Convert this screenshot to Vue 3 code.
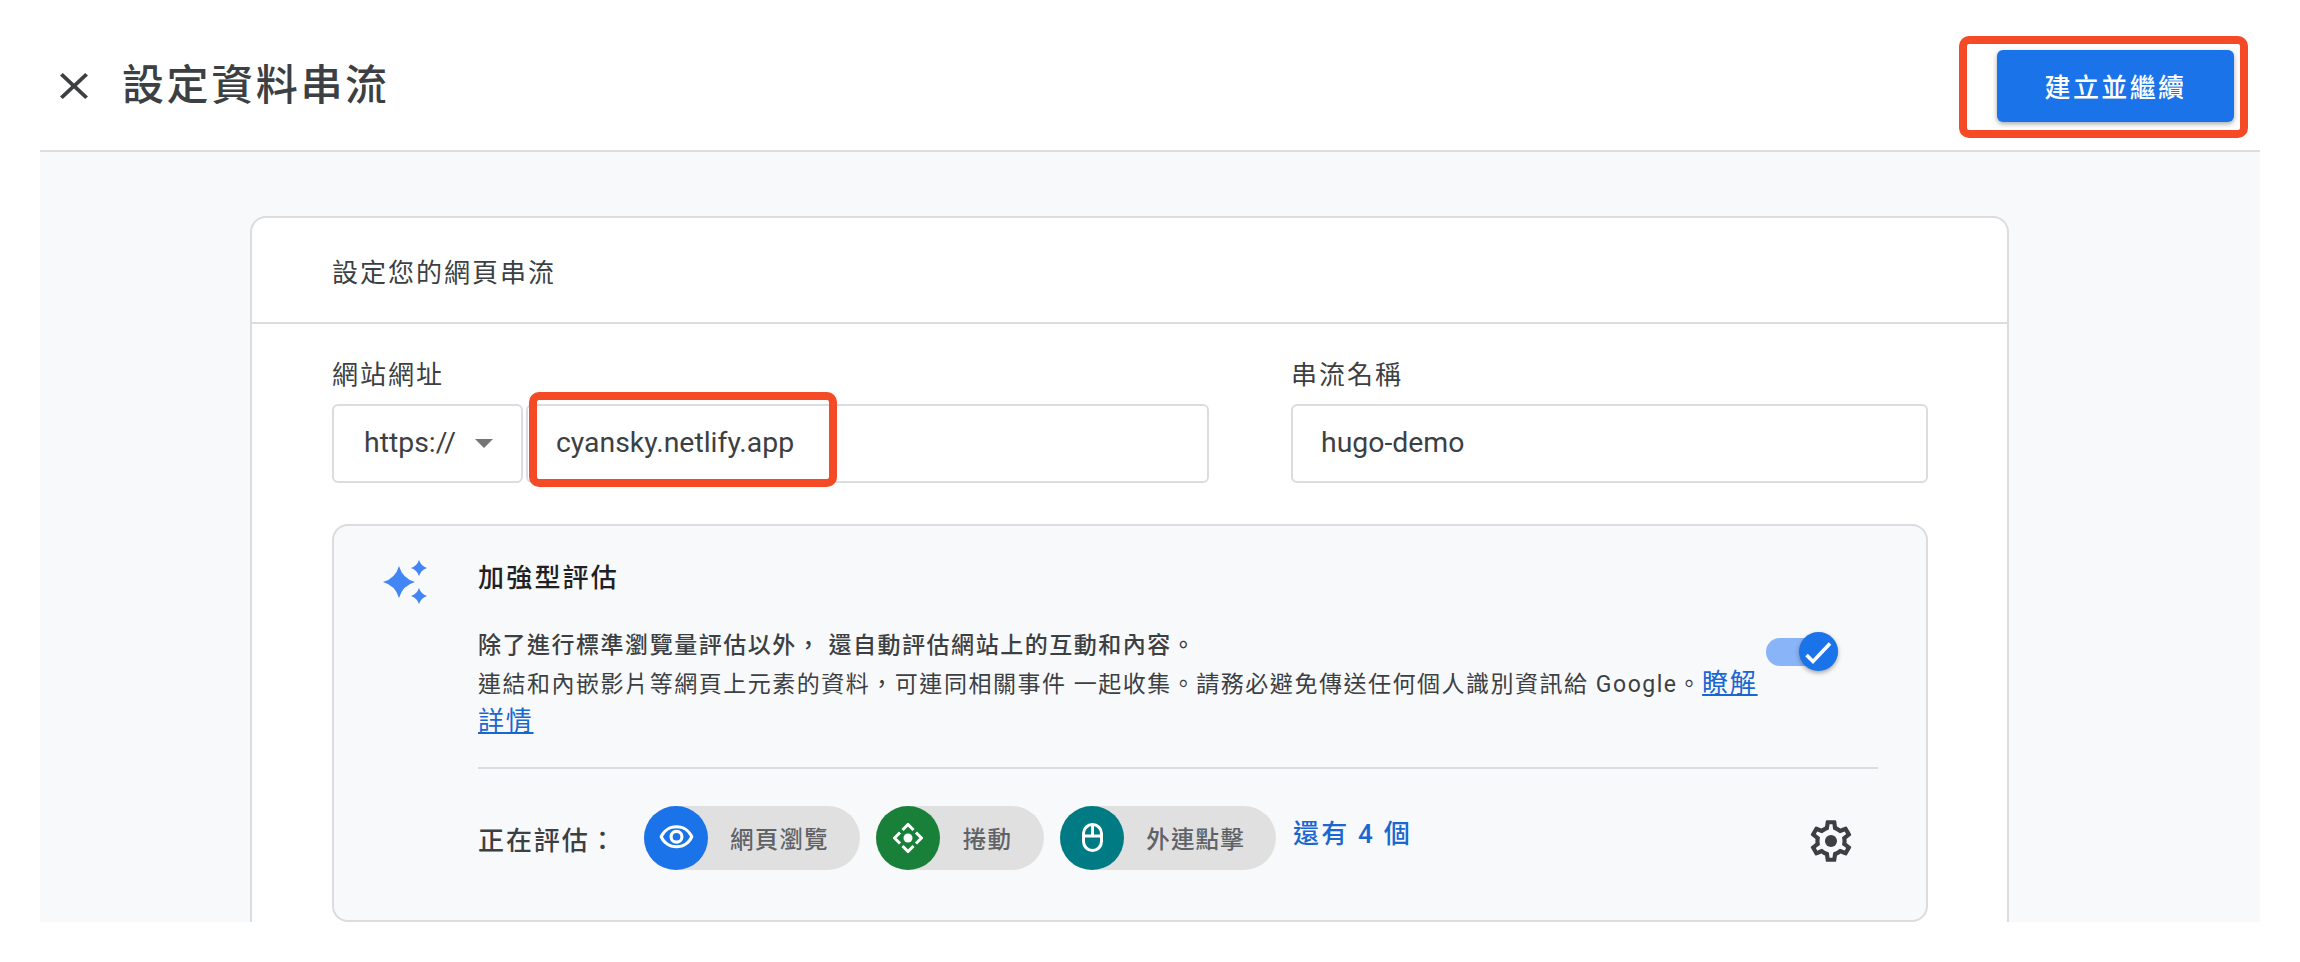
<script setup>
// 已啟用的評估項目
const chips = [
  { key: "view", label: "網頁瀏覽", color: "#1a73e8" },
  { key: "scroll", label: "捲動", color: "#188038" },
  { key: "click", label: "外連點擊", color: "#007b83" },
];
</script>

<template>
  <div class="page">
    <header class="top">
      <svg class="close" viewBox="5 5 14 14" preserveAspectRatio="none">
        <path d="M19 6.41L17.59 5 12 10.59 6.41 5 5 6.41 10.59 12 5 17.59 6.41 19 12 13.41 17.59 19 19 17.59 13.41 12z" />
      </svg>
      <h1 class="title">設定資料串流</h1>
      <div class="save-wrap">
        <button class="save">建立並繼續</button>
        <div class="mark mark-save"></div>
      </div>
    </header>

    <main class="main">
      <section class="card">
        <div class="card-head">設定您的網頁串流</div>
        <div class="card-body">
          <div class="form-row">
            <div class="field-url">
              <label class="label">網站網址</label>
              <div class="url-inputs">
                <div class="select">
                  <span>https://</span>
                  <i class="caret"></i>
                </div>
                <div class="input url-input">
                  cyansky.netlify.app
                  <div class="mark mark-url"></div>
                </div>
              </div>
            </div>
            <div class="field-name">
              <label class="label">串流名稱</label>
              <div class="input">hugo-demo</div>
            </div>
          </div>

          <div class="measure">
            <svg class="sparkle" viewBox="0 0 44 44">
              <path d="M16 6Q19.5 18.5 32 22Q19.5 25.5 16 38Q12.5 25.5 0 22Q12.5 18.5 16 6Z" />
              <path d="M36 0Q38 6 44 8Q38 10 36 16Q34 10 28 8Q34 6 36 0Z" />
              <path d="M36 28Q38 34 44 36Q38 38 36 44Q34 38 28 36Q34 34 36 28Z" />
            </svg>
            <div class="measure-body">
              <div class="measure-title">加強型評估</div>
              <div class="desc-row">
                <div class="desc">
                  <div class="desc-strong">除了進行標準瀏覽量評估以外， 還自動評估網站上的互動和內容。</div>
                  <div>連結和內嵌影片等網頁上元素的資料，可連同相關事件 一起收集。請務必避免傳送任何個人識別資訊給 Google。<a class="link">瞭解詳情</a></div>
                </div>
                <div class="toggle">
                  <div class="thumb">
                    <svg viewBox="0 0 39 39" width="39" height="39">
                      <path d="M7.5 23L14 29.5L31 11.5" fill="none" stroke="#fff" stroke-width="3.6" />
                    </svg>
                  </div>
                </div>
              </div>
              <div class="divider"></div>
              <div class="chip-row">
                <span class="chip-label">正在評估：</span>
                <div class="chips">
                  <div v-for="chip in chips" :key="chip.key" class="chip">
                    <span class="chip-icon" :style="{ background: chip.color }">
                      <svg v-if="chip.key === 'view'" viewBox="0 0 24 24" width="37" height="37" fill="#fff">
                        <path d="M12 6a9.77 9.77 0 0 1 8.82 5.5A9.77 9.77 0 0 1 12 17a9.77 9.77 0 0 1-8.82-5.5A9.77 9.77 0 0 1 12 6m0-2C7 4 2.73 7.11 1 11.5 2.73 15.89 7 19 12 19s9.27-3.11 11-7.5C21.27 7.11 17 4 12 4zm0 5a2.5 2.5 0 0 1 0 5 2.5 2.5 0 0 1 0-5m0-2c-2.48 0-4.5 2.02-4.5 4.5S9.52 16 12 16s4.5-2.02 4.5-4.5S14.48 7 12 7z" />
                      </svg>
                      <svg v-else-if="chip.key === 'scroll'" viewBox="0 0 30 30" width="30" height="30">
                        <path d="M9.5 7L15 1.5L20.5 7M9.5 23L15 28.5L20.5 23M7 9.5L1.5 15L7 20.5M23 9.5L28.5 15L23 20.5" fill="none" stroke="#fff" stroke-width="3" />
                        <circle cx="15" cy="15" r="4.5" fill="#fff" />
                      </svg>
                      <svg v-else viewBox="0 0 21 29" width="21" height="29" fill="none" stroke="#fff" stroke-width="3">
                        <rect x="1.5" y="1.5" width="18" height="26" rx="9" />
                        <path d="M1.5 13H19.5M10.5 1.5V13" />
                      </svg>
                    </span>
                    <span class="chip-text">{{ chip.label }}</span>
                  </div>
                </div>
                <a class="more">還有 4 個</a>
                <svg class="gear" viewBox="0 0 24 24" width="50" height="50" fill="#3c4043">
                  <path d="M19.43 12.98c.04-.32.07-.64.07-.98 0-.34-.03-.66-.07-.98l2.11-1.65c.19-.15.24-.42.12-.64l-2-3.46c-.09-.16-.26-.25-.44-.25-.06 0-.12.01-.17.03l-2.49 1c-.52-.4-1.08-.73-1.69-.98l-.38-2.65C14.46 2.18 14.25 2 14 2h-4c-.25 0-.46.18-.49.42l-.38 2.65c-.61.25-1.17.59-1.69.98l-2.49-1c-.06-.02-.12-.03-.18-.03-.17 0-.34.09-.43.25l-2 3.46c-.13.22-.07.49.12.64l2.11 1.65c-.04.32-.07.65-.07.98 0 .33.03.66.07.98l-2.11 1.65c-.19.15-.24.42-.12.64l2 3.46c.09.16.26.25.44.25.06 0 .12-.01.17-.03l2.49-1c.52.4 1.08.73 1.69.98l.38 2.65c.03.24.24.42.49.42h4c.25 0 .46-.18.49-.42l.38-2.65c.61-.25 1.17-.59 1.69-.98l2.49 1c.06.02.12.03.18.03.17 0 .34-.09.43-.25l2-3.46c.12-.22.07-.49-.12-.64l-2.11-1.65zm-1.98-1.71c.04.31.05.52.05.73 0 .21-.02.43-.05.73l-.14 1.13.89.7 1.08.84-.7 1.21-1.27-.51-1.04-.42-.9.68c-.43.32-.84.56-1.25.73l-1.06.43-.16 1.13-.2 1.35h-1.4l-.19-1.35-.16-1.13-1.06-.43c-.43-.18-.83-.41-1.23-.71l-.91-.7-1.06.43-1.27.51-.7-1.21 1.08-.84.89-.7-.14-1.13c-.03-.31-.05-.54-.05-.74s.02-.43.05-.73l.14-1.13-.89-.7-1.08-.84.7-1.21 1.27.51 1.04.42.9-.68c.43-.32.84-.56 1.25-.73l1.06-.43.16-1.13.2-1.35h1.39l.19 1.35.16 1.13 1.06.43c.43.18.83.41 1.23.71l.91.7 1.06-.43 1.27-.51.7 1.21-1.07.85-.89.7.14 1.13z" />
                  <circle cx="12" cy="12" r="2.9" />
                </svg>
              </div>
            </div>
          </div>
        </div>
      </section>
    </main>
  </div>
</template>

<style>
html,
body {
  margin: 0;
  background: #fff;
  overflow: hidden;
}
</style>

<style scoped>
.page {
  width: 2300px;
  height: 962px;
  box-sizing: border-box;
  padding: 0 40px;
  background: #fff;
  overflow: hidden;
  font-family: Roboto, "Noto Sans CJK TC", sans-serif;
  color: #3c4043;
}

.top {
  height: 152px;
  box-sizing: border-box;
  display: flex;
  align-items: center;
  padding: 21px 26px 0 20px;
  border-bottom: 2px solid #dadce0;
}

.close {
  width: 28px;
  height: 26px;
  fill: #3c4043;
  flex: none;
}

.title {
  margin: 0 0 0 34px;
  font-size: 42px;
  font-weight: 500;
  letter-spacing: 2.6px;
  line-height: 60px;
}

.save-wrap {
  position: relative;
  margin-left: auto;
}

.save {
  display: block;
  width: 237px;
  height: 72px;
  padding: 0;
  border: none;
  border-radius: 6px;
  background: #1a73e8;
  box-shadow: 0 2px 5px rgba(60, 64, 67, 0.45);
  color: #fff;
  font-family: inherit;
  font-size: 26px;
  font-weight: 500;
  letter-spacing: 2.4px;
}

.mark {
  position: absolute;
  box-sizing: border-box;
  border: 8px solid #f44a25;
  border-radius: 10px;
  pointer-events: none;
}

.mark-save {
  left: -38px;
  top: -14px;
  width: 289px;
  height: 102px;
}

.mark-url {
  left: 1px;
  top: -14px;
  width: 308px;
  height: 95px;
}

.main {
  height: 770px;
  box-sizing: border-box;
  padding: 64px 251px 0 210px;
  background: #f8f9fa;
  overflow: hidden;
}

.card {
  height: 900px;
  box-sizing: border-box;
  background: #fff;
  border: 2px solid #dadce0;
  border-radius: 16px 16px 0 0;
}

.card-head {
  height: 106px;
  box-sizing: border-box;
  display: flex;
  align-items: center;
  padding-left: 80px;
  border-bottom: 2px solid #dadce0;
  font-size: 26px;
  letter-spacing: 2px;
}

.card-body {
  padding: 28px 79px 0 80px;
}

.form-row {
  display: grid;
  grid-template-columns: 877px 637px;
  column-gap: 82px;
}

.label {
  display: block;
  height: 52px;
  line-height: 46px;
  font-size: 26px;
  letter-spacing: 2px;
}

.url-inputs {
  display: flex;
  gap: 3px;
}

.select,
.input {
  height: 79px;
  box-sizing: border-box;
  display: flex;
  align-items: center;
  padding-bottom: 2px;
  border: 2px solid #dadce0;
  border-radius: 6px;
  background: #fff;
  font-size: 28.4px;
}

.select {
  width: 191px;
  flex: none;
  padding-left: 30px;
}

.caret {
  width: 0;
  height: 0;
  margin: 2px 0 0 19px;
  border-left: 9px solid transparent;
  border-right: 9px solid transparent;
  border-top: 9px solid #757575;
}

.input {
  padding-left: 28px;
}

.url-input {
  position: relative;
  flex: 1;
}

.measure {
  display: flex;
  height: 398px;
  box-sizing: border-box;
  margin-top: 41px;
  border: 2px solid #dadce0;
  border-radius: 16px;
  background: #f8f9fa;
}

.sparkle {
  width: 44px;
  height: 44px;
  flex: none;
  margin: 34px 51px 0 49px;
  fill: #4285f4;
}

.measure-body {
  flex: 1;
  min-width: 0;
  padding: 32px 48px 0 0;
}

.measure-title {
  line-height: 40px;
  font-size: 26px;
  font-weight: 500;
  letter-spacing: 2.2px;
  color: #202124;
}

.desc-row {
  display: flex;
  margin-top: 29px;
}

.desc {
  width: 1286px;
  flex: none;
  line-height: 37.5px;
  font-size: 23px;
  letter-spacing: 1.52px;
}

.desc-strong {
  font-weight: 500;
}

.link {
  color: #1967d2;
  font-size: 26px;
  letter-spacing: 1.75px;
  text-decoration: underline;
}

.toggle {
  position: relative;
  width: 72px;
  height: 28px;
  margin: 11px 0 0 2px;
  border-radius: 14px;
  background: #8ab4f8;
}

.thumb {
  position: absolute;
  right: 0;
  top: -6px;
  width: 39px;
  height: 39px;
  border-radius: 50%;
  background: #1a73e8;
  box-shadow: 0 2px 4px rgba(60, 64, 67, 0.45);
}

.thumb svg {
  display: block;
}

.divider {
  height: 2px;
  margin-top: 25px;
  background: #dadce0;
}

.chip-row {
  display: flex;
  align-items: center;
  margin-top: 37px;
}

.chip-label {
  width: 166px;
  flex: none;
  margin-top: 2px;
  font-size: 26px;
  font-weight: 500;
  letter-spacing: 1.9px;
}

.chips {
  display: flex;
  gap: 16px;
}

.chip {
  height: 64px;
  display: flex;
  align-items: center;
  padding-right: 31px;
  border-radius: 32px;
  background: #e0e0e0;
}

.chip:nth-child(2) {
  padding-right: 32px;
}

.chip:nth-child(2) .chip-icon {
  margin-right: 23px;
}

.chip-icon {
  width: 64px;
  height: 64px;
  flex: none;
  display: flex;
  align-items: center;
  justify-content: center;
  margin-right: 22px;
  border-radius: 50%;
}

.chip-text {
  font-size: 23.5px;
  font-weight: 500;
  letter-spacing: 1.2px;
  color: #5f6368;
}

.more {
  margin: -12px 0 0 17px;
  font-size: 26px;
  font-weight: 500;
  letter-spacing: 2.2px;
  color: #1967d2;
}

.gear {
  flex: none;
  margin: 7px 22px 0 auto;
}
</style>
